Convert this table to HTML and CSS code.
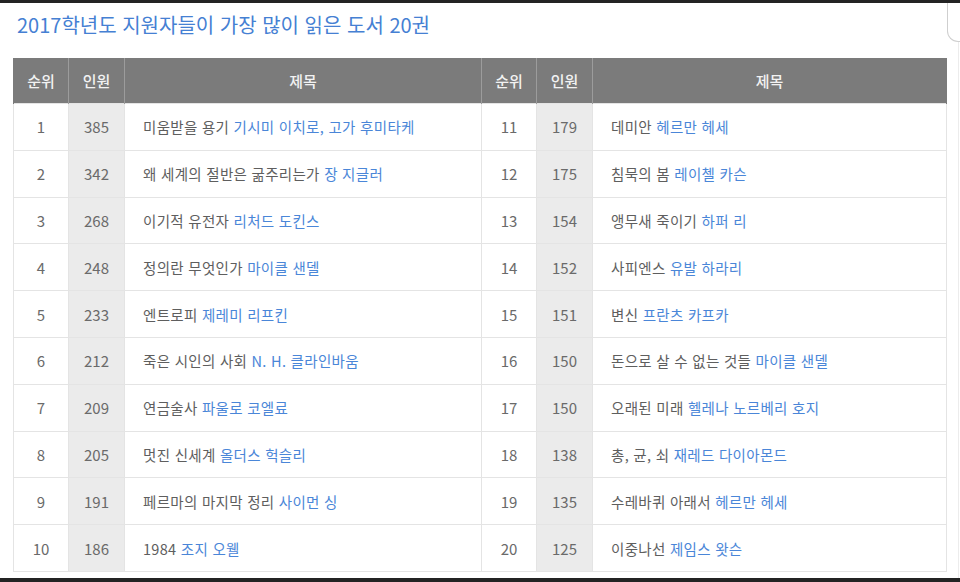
FILE: index.html
```html
<!doctype html>
<html lang="ko">
<head>
	<meta charset="UTF-8">
	<title>2017학년도 지원자들이 가장 많이 읽은 도서 20권</title>
	<link rel="stylesheet" href="styles.css">
</head>
<body>
	<div class="page">
		<div class="topbar"></div>
		<h1 class="title">2017학년도 지원자들이 가장 많이 읽은 도서 20권</h1>

		<table class="books">
			<colgroup>
				<col class="c-rank"><col class="c-count"><col class="c-name">
				<col class="c-rank"><col class="c-count"><col class="c-name2">
			</colgroup>
			<thead>
				<tr>
					<th>순위</th><th>인원</th><th>제목</th>
					<th>순위</th><th>인원</th><th>제목</th>
				</tr>
			</thead>
			<tbody>
				<tr>
					<td>1</td><td class="count">385</td><td class="name">미움받을 용기 <span class="author">기시미 이치로, 고가 후미타케</span></td>
					<td>11</td><td class="count">179</td><td class="name">데미안 <span class="author">헤르만 헤세</span></td>
				</tr>
				<tr>
					<td>2</td><td class="count">342</td><td class="name">왜 세계의 절반은 굶주리는가 <span class="author">장 지글러</span></td>
					<td>12</td><td class="count">175</td><td class="name">침묵의 봄 <span class="author">레이첼 카슨</span></td>
				</tr>
				<tr>
					<td>3</td><td class="count">268</td><td class="name">이기적 유전자 <span class="author">리처드 도킨스</span></td>
					<td>13</td><td class="count">154</td><td class="name">앵무새 죽이기 <span class="author">하퍼 리</span></td>
				</tr>
				<tr>
					<td>4</td><td class="count">248</td><td class="name">정의란 무엇인가 <span class="author">마이클 샌델</span></td>
					<td>14</td><td class="count">152</td><td class="name">사피엔스 <span class="author">유발 하라리</span></td>
				</tr>
				<tr>
					<td>5</td><td class="count">233</td><td class="name">엔트로피 <span class="author">제레미 리프킨</span></td>
					<td>15</td><td class="count">151</td><td class="name">변신 <span class="author">프란츠 카프카</span></td>
				</tr>
				<tr>
					<td>6</td><td class="count">212</td><td class="name">죽은 시인의 사회 <span class="author">N. H. 클라인바움</span></td>
					<td>16</td><td class="count">150</td><td class="name">돈으로 살 수 없는 것들 <span class="author">마이클 샌델</span></td>
				</tr>
				<tr>
					<td>7</td><td class="count">209</td><td class="name">연금술사 <span class="author">파울로 코엘료</span></td>
					<td>17</td><td class="count">150</td><td class="name">오래된 미래 <span class="author">헬레나 노르베리 호지</span></td>
				</tr>
				<tr>
					<td>8</td><td class="count">205</td><td class="name">멋진 신세계 <span class="author">올더스 헉슬리</span></td>
					<td>18</td><td class="count">138</td><td class="name">총, 균, 쇠 <span class="author">재레드 다이아몬드</span></td>
				</tr>
				<tr>
					<td>9</td><td class="count">191</td><td class="name">페르마의 마지막 정리 <span class="author">사이먼 싱</span></td>
					<td>19</td><td class="count">135</td><td class="name">수레바퀴 아래서 <span class="author">헤르만 헤세</span></td>
				</tr>
				<tr>
					<td>10</td><td class="count">186</td><td class="name">1984 <span class="author">조지 오웰</span></td>
					<td>20</td><td class="count">125</td><td class="name">이중나선 <span class="author">제임스 왓슨</span></td>
				</tr>
			</tbody>
		</table>

		<div class="bottombar"></div>
		<div class="scroll-edge"></div>
		<div class="scroll-line"></div>
	</div>
</body>
</html>
```

FILE: styles.css
```css
html, body {
	margin: 0;
	padding: 0;
	background: #fff;
}
body {
	font-family: "Noto Sans CJK KR", "Noto Sans", sans-serif;
	color: #666;
}

.page {
	position: relative;
	display: flex;
	flex-direction: column;
	width: 960px;
	height: 582px;
	overflow: hidden;
}

.topbar { height: 3px; background: #232323; }
.bottombar { height: 4px; margin-top: auto; background: #232323; }

.title {
	margin: 0 0 20px 0;
	padding: 9px 0 0 17px;
	font-size: 20px;
	line-height: 26px;
	font-weight: 400;
	letter-spacing: 0;
	color: #4580d3;
}

.books {
	margin-left: 13px;
	width: 933px;
	border-collapse: collapse;
	table-layout: fixed;
	font-size: 15px;
}
.c-rank { width: 55px; }
.c-count { width: 56px; }
.c-name { width: 357px; }
.c-name2 { width: 354px; }

.books th {
	height: 45px;
	padding: 0;
	background: #7b7b7b;
	color: #f2f2f2;
	font-weight: 500;
	border-left: 1px solid #9c9c9c;
	border-right: 1px solid #9c9c9c;
}
.books th:first-child { border-left-color: #7b7b7b; }
.books th:last-child { border-right-color: #7b7b7b; }

.books td {
	height: 45.8px;
	padding: 0;
	text-align: center;
	color: #6a6a6a;
	border: 1px solid #e4e4e4;
}
.books td.count { background: #ebebeb; }
.books td.name {
	text-align: left;
	padding-left: 18px;
	font-size: 14.5px;
	color: #5e5e5e;
	letter-spacing: 0.3px;
}
.author { color: #4a86d8; }

.scroll-edge {
	position: absolute;
	left: 947px;
	top: 3px;
	width: 20px;
	height: 38px;
	border-left: 1px solid #cfcfcf;
	border-bottom: 1px solid #cfcfcf;
	border-bottom-left-radius: 11px;
}
.scroll-line {
	position: absolute;
	left: 958px;
	top: 42px;
	width: 1px;
	height: 536px;
	background: #ececec;
}
```
